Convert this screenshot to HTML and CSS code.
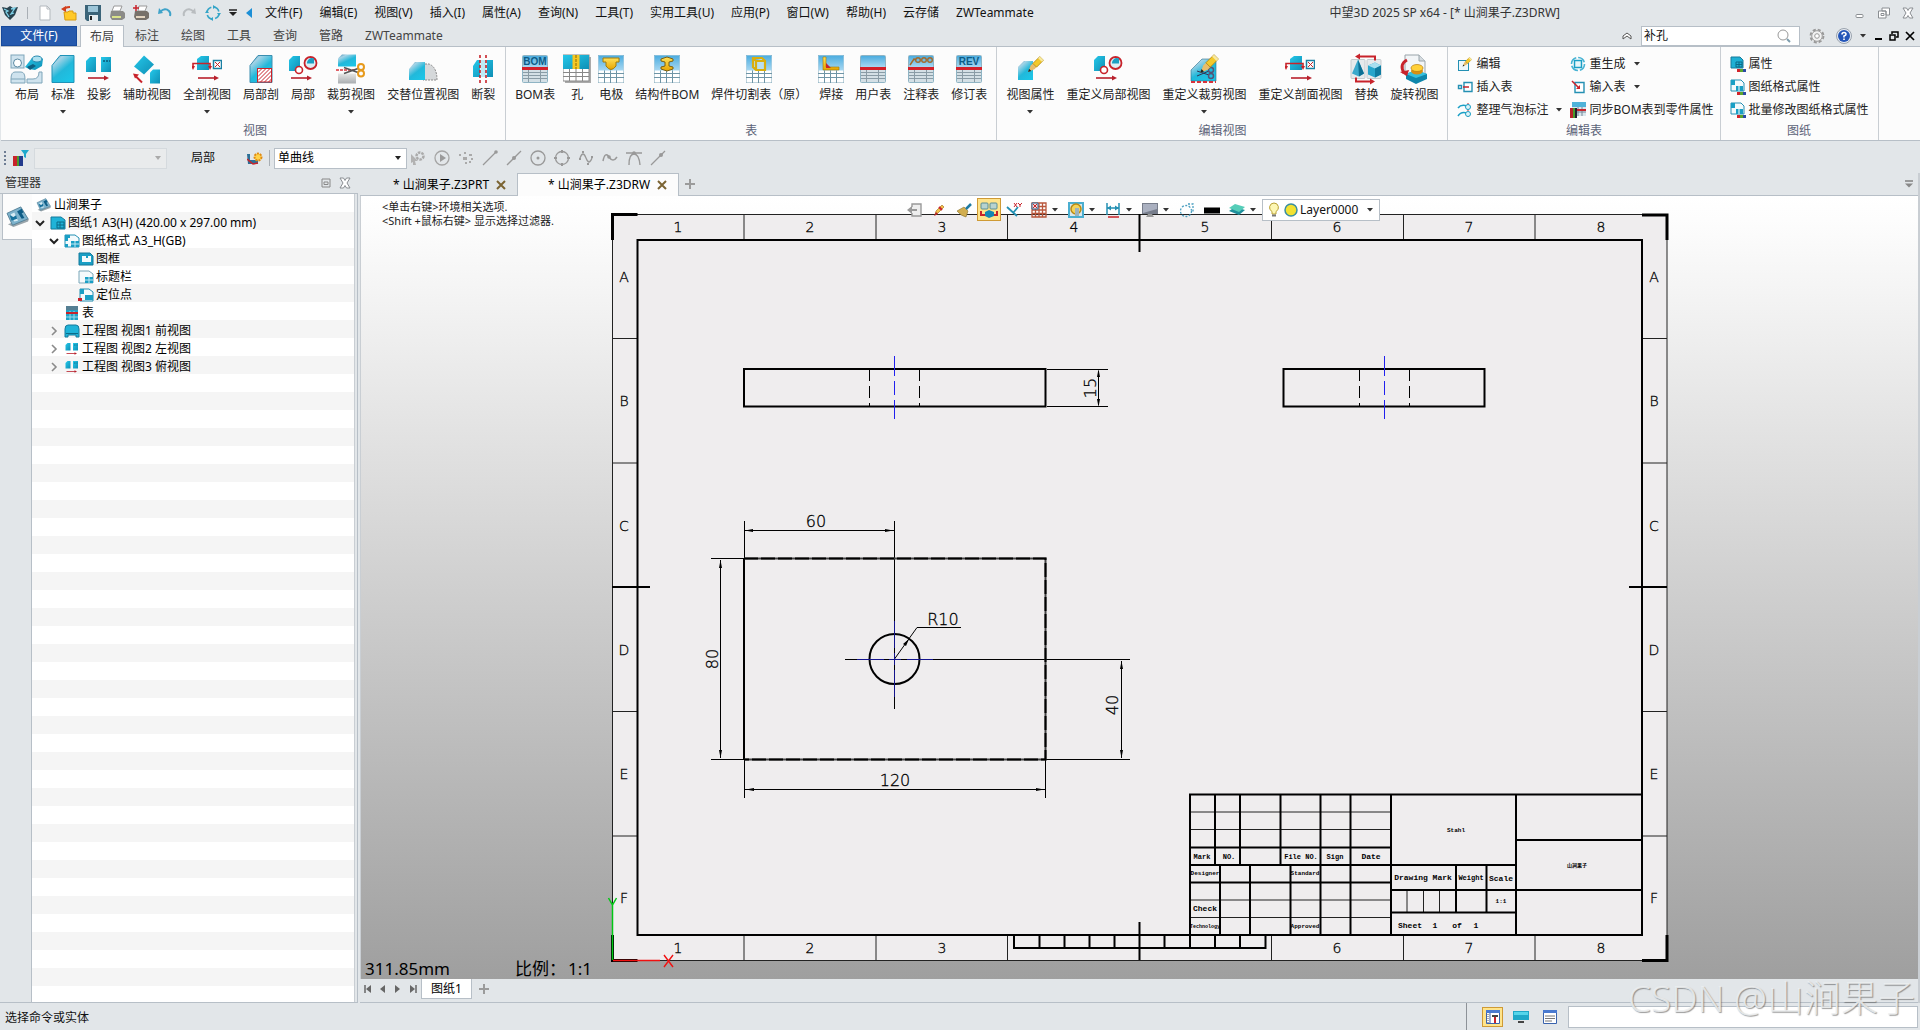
FILE: index.html
```html
<!DOCTYPE html>
<html lang="zh-CN">
<head>
<meta charset="utf-8">
<title>中望3D 2025 SP x64 - [* 山涧果子.Z3DRW]</title>
<link rel="stylesheet" href="styles.css">
</head>
<body>
<svg class="sprite" aria-hidden="true">
  <defs>
    <linearGradient id="cy" x1="0" y1="0" x2=".7" y2="1"><stop offset="0" stop-color="#3a86ad"/><stop offset=".25" stop-color="#a5d3e6"/><stop offset=".6" stop-color="#22b8da"/><stop offset="1" stop-color="#1cc4e6"/></linearGradient>
    <linearGradient id="cb" x1="0" y1="0" x2="1" y2="1"><stop offset="0" stop-color="#25c8ea"/><stop offset="1" stop-color="#0f8fb5"/></linearGradient>
    <linearGradient id="sky" x1="0" y1="0" x2="0" y2="1"><stop offset="0" stop-color="#4bacdf"/><stop offset="1" stop-color="#a8d8f2"/></linearGradient>
    <linearGradient id="gr" x1="0" y1="0" x2="0" y2="1"><stop offset="0" stop-color="#e6e6e6"/><stop offset="1" stop-color="#a9adb0"/></linearGradient>
    <linearGradient id="au" x1="0" y1="0" x2="0" y2="1"><stop offset="0" stop-color="#ffe25a"/><stop offset="1" stop-color="#e6a400"/></linearGradient>
  </defs>
  <symbol id="pencil" viewBox="0 0 16 16"><path d="M1 15l2.500-6L10 2.500 13.500 6 7 12.500z" fill="#e8bd6a"/><path d="M5.500 7L12 .5 15.500 4 9 10.500z" fill="#f3c92b" stroke="#a67c10" stroke-width=".6"/><path d="M12 .5L15.500 4 14 5.500 10.500 2z" fill="#f7e9a0"/><path d="M1 15l1-3 2 2z" fill="#222"/></symbol>
  <symbol id="tbl" viewBox="0 0 26 28"><rect width="26" height="28" rx="1" fill="#fff" stroke="#7fa6b8"/><path d="M0 18.500h26M0 22.500h26M6.500 15v13M12.500 15v13M18.500 15v13" stroke="#6f95a6" fill="none"/><rect x=".5" y=".5" width="25" height="15" fill="url(#sky)"/></symbol>
  <symbol id="bomt" viewBox="0 0 26 28"><rect x=".5" y=".5" width="25" height="27" rx="1" fill="#d4e0e6" stroke="#8fb4c4"/><rect x="1" y="1" width="24" height="11" fill="url(#sky)"/><path d="M1 17.500h24M1 20.500h24M1 23.500h24M6.500 15v12M18.500 15v12" stroke="#8a9ca6" fill="none"/><path d="M0 12h26v3H0z" fill="#d3202a"/></symbol>
  <symbol id="sect" viewBox="0 0 30 28"><path d="M5 4l4-3h8v14H5z" fill="url(#cb)"/><path d="M1 12V8.500h17V12" fill="none" stroke="#c8232b" stroke-width="1.600"/><path d="M-1 11h4l-2 4zM16 11h4l-2 4z" fill="#c8232b"/><rect x="21.500" y="5.500" width="8" height="8" fill="#fff" stroke="#1b7fa3" stroke-width="1.500"/><path d="M23 12l5-5M23 7l5 5" stroke="#c8232b"/><path d="M6 23h17" stroke="#b8202c" stroke-width="1.600"/><path d="M22 20.500l5 2.500-5 2.500z" fill="#b8202c"/></symbol>
  <symbol id="detail" viewBox="0 0 30 28"><path d="M1 5l4-4h7v15H1z" fill="url(#cb)"/><circle cx="11" cy="15" r="3.500" fill="#fff" stroke="#c8232b" stroke-width="1.600"/><circle cx="22.500" cy="8" r="6" fill="#dceff5" stroke="#c8232b" stroke-width="1.800"/><path d="M19 8.500h7v-5a5 5 0 0 0-7 5z" fill="#1b9fc3"/><path d="M3 23h17" stroke="#b8202c" stroke-width="1.600"/><path d="M19 20.500l5 2.500-5 2.500z" fill="#b8202c"/></symbol>
  <symbol id="proj" viewBox="0 0 28 28"><path d="M1 6l4-4h6v15H1z" fill="url(#cb)"/><path d="M16 2h10v15H16z" fill="url(#cb)"/><path d="M18 6h7" stroke="#075b7a" stroke-width="1.500" stroke-dasharray="2 1"/><path d="M3 23h17" stroke="#b8202c" stroke-width="1.600"/><path d="M19 20.500l5 2.500-5 2.500z" fill="#b8202c"/></symbol>
  <symbol id="std" viewBox="0 0 24 29"><path d="M1 11L9 1h14v27H1z" fill="url(#cy)" stroke="#1f93b8"/></symbol>
  <symbol id="lay" viewBox="0 0 34 30"><rect x="1" y="1" width="13" height="13" fill="#cfe3ee" stroke="#7fa5b9"/><circle cx="7.500" cy="9" r="4" fill="#fff" stroke="#5b8aa3"/><path d="M15 13l7-9 7-2 4 3-1 7-7 4-6-1z" fill="url(#cb)"/><ellipse cx="27" cy="5" rx="5" ry="3" fill="#aee1f0" stroke="#2b8bb0"/><path d="M17 13l6-3 3 2-6 4z" fill="#0f5f80"/><path d="M1 25q0-7 4-7h6q4 0 4 7v4H1z" fill="#cfe3ee" stroke="#7fa5b9"/><path d="M1 25h14" stroke="#7fa5b9"/><path d="M29 18h3v11H17v-4h6q6 0 6-7z" fill="#cfe3ee" stroke="#7fa5b9"/></symbol>
  <symbol id="aux" viewBox="0 0 28 29"><path d="M11 1l10 9-10 10L1 12z" fill="url(#cb)"/><path d="M17 29V18l3-3h7v14z" fill="url(#cb)"/><path d="M9 28l-6-6" stroke="#c8232b" stroke-width="2"/><path d="M0 19l6 1-4 4z" fill="#c8232b"/></symbol>
  <symbol id="broken" viewBox="0 0 24 29"><path d="M1 11L9 1h14v27H1z" fill="url(#cy)" stroke="#3a8eb0"/><rect x="8.500" y="14" width="14" height="13.500" fill="#fff" stroke="#c8232b"/><path d="M9 18l3.500-3.500M9 22l7.500-7.500M9 26l11.500-11.500M11.500 27.500l11-11M15.500 27.500l7-7M19.500 27.500l3-3" stroke="#c8232b"/></symbol>
  <symbol id="cut" viewBox="0 0 30 31"><path d="M2 5l4-4h14v12H2z" fill="url(#cy)"/><path d="M2 20h18v10H2z" fill="url(#gr)"/><path d="M0 16.500h20" stroke="#d8323a" stroke-width="1.500" stroke-dasharray="3 1"/><path d="M8 14l14 5M8 20l14-5" stroke="#555" stroke-width="1.600"/><circle cx="25" cy="13.500" r="3" fill="none" stroke="#e79a1c" stroke-width="2"/><circle cx="25" cy="20" r="3" fill="none" stroke="#e79a1c" stroke-width="2"/></symbol>
  <symbol id="alt" viewBox="0 0 30 28"><path d="M15 25V9h6q8 3 8 16z" fill="#d5d8da" stroke="#888" stroke-dasharray="2 1"/><path d="M1 14l6-7h10v18H1z" fill="url(#cy)"/></symbol>
  <symbol id="brk" viewBox="0 0 22 28"><path d="M1 11l4-6h3v17H1zM15 5h6v17h-6z" fill="url(#cb)"/><path d="M8.500 5h6v17h-6z" fill="#bfeaf5"/><path d="M8 0v28M14 0v28" stroke="#c8232b" stroke-width="1.600" stroke-dasharray="3 2"/></symbol>
  <symbol id="swap" viewBox="0 0 32 31"><rect x="1" y="6" width="14" height="19" rx="1" fill="#e6eaec" stroke="#c5cbce"/><rect x="17" y="6" width="14" height="19" rx="1" fill="#e6eaec" stroke="#c5cbce"/><path d="M8 6l6 14-5 3-7-3z" fill="#3ba9cc"/><path d="M8 6l6 14-5 3z" fill="#0d6f93"/><path d="M18 12l7-3 6 3v9l-6 3-7-3z" fill="#27a5cb"/><path d="M18 12l7-3 6 3-6 3z" fill="#a8dff0"/><path d="M25 15l6-3v9l-6 3z" fill="#0f7ba0"/><path d="M25 7V3H9M6 24v4h15" fill="none" stroke="#c8232b" stroke-width="2"/><path d="M10 0v6L5 3zM20 25v6l5-3z" fill="#c8232b"/></symbol>
  <symbol id="rot" viewBox="0 0 30 30"><path d="M6 1h14l6 6v14H6z" fill="#f2f5f7" stroke="#99a4aa"/><path d="M20 1v6h6" fill="#d5dbdf" stroke="#99a4aa"/><path d="M7 20l10-4 11 4v5l-11 5-10-5z" fill="#0f86ab"/><path d="M7 20l10-4 11 4-11 4z" fill="#35c0df"/><ellipse cx="18" cy="17" rx="6" ry="3.500" fill="#d98f12"/><ellipse cx="18" cy="14" rx="6" ry="3.500" fill="#ffd038" stroke="#b97b0a" stroke-width=".7"/><path d="M8 6q-8 4-3 13" fill="none" stroke="#c8232b" stroke-width="3"/><path d="M1 18l9-2-2 6z" fill="#c8232b"/></symbol>
  <symbol id="prop" viewBox="0 0 16 16"><path d="M1 1h9l3 3v8H1z" fill="#1fb0d4" stroke="#167b9b"/><path d="M6 6h6v5H6zM9 6v5M6 8.500h6" fill="none" stroke="#0b6b88"/><path d="M7 13h3v3H7z" fill="#d2232a"/><path d="M10 13h3v3h-3z" fill="#5da52c"/><path d="M13 13h3v3h-3z" fill="#2b49a5"/></symbol>
  <symbol id="fmt" viewBox="0 0 16 16"><path d="M1 1h10l3 3v8H1z" fill="#f4fafc" stroke="#2490b3"/><path d="M1 1h4v5H1zM6 7h7v5H6z" fill="#1a9fc5"/><path d="M9 7v5" stroke="#fff"/><path d="M7 13h3v3H7z" fill="#d2232a"/><path d="M10 13h3v3h-3z" fill="#5da52c"/><path d="M13 13h3v3h-3z" fill="#2b49a5"/></symbol>
  <symbol id="sheet" viewBox="0 0 16 14"><path d="M1 1h10l4 3v9H1z" fill="#1fb3d8" stroke="#157b9c"/><path d="M7 6h7v6H7zM10 6v6M7 9h7" fill="none" stroke="#0b6b88"/></symbol>
  <symbol id="sheetf" viewBox="0 0 16 14"><path d="M1 1h10l4 3v9H1z" fill="#f4fafc" stroke="#2490b3"/><path d="M1 1h5v3H4v3H1zM1 10h3v3H1zM7 7h8v6H7z" fill="#1a9fc5"/><path d="M11 7v6M7 10h8" stroke="#bfe8f3"/></symbol>
  <symbol id="frame" viewBox="0 0 16 14"><path d="M1 1h11l3 3v9H1z" fill="#1a9fc5" stroke="#157b9c"/><path d="M4 4h4v2h2V4h3v6H4z" fill="#f4fafc"/></symbol>
  <symbol id="title" viewBox="0 0 16 14"><path d="M1 1h10l4 3v9H1z" fill="#f4fafc" stroke="#7ba6b8"/><path d="M7 7h8v6H7z" fill="#1a9fc5"/><path d="M11 7v6M7 10h8" stroke="#bfe8f3"/></symbol>
  <symbol id="anchor" viewBox="0 0 16 14"><path d="M2 1h9l4 3v9H2z" fill="#f4fafc" stroke="#2490b3"/><path d="M2 1h4v5H2zM7 7h8v5H7z" fill="#1a9fc5"/><path d="M0 10h4v3H0z" fill="#c8232b"/></symbol>
  <symbol id="car" viewBox="0 0 16 14"><path d="M1 5q0-4 3-4h8q3 0 3 4v8h-3v-2H4v2H1z" fill="#1fb3d8" stroke="#157b9c"/><path d="M2 9.500h12" stroke="#0b6b88"/></symbol>
  <symbol id="root" viewBox="0 0 26 24"><path d="M2 20l6 3 16-6 1-3-18 4z" fill="#9aa5ab"/><path d="M1 8L16 1l8 13-17 7z" fill="#7db2cc" stroke="#537f96"/><path d="M5 9l4-2 4 9-4 1z" fill="#d7ebf4"/><path d="M12 6l5-3 2 4-2 1 3 5-3 1z" fill="#0d5c86"/><path d="M4 10l2 6 6-2-1-4-3 2z" fill="#17719c"/></symbol>
  <symbol id="chev-d" viewBox="0 0 10 8"><path d="M1 2l4 4 4-4" fill="none" stroke="#222" stroke-width="2"/></symbol>
  <symbol id="chev-r" viewBox="0 0 8 10"><path d="M2 1l4 4-4 4" fill="none" stroke="#8b8b8b" stroke-width="1.600"/></symbol>
  <symbol id="dn" viewBox="0 0 6 4"><path d="M0 0h6L3 3.500z" fill="#333"/></symbol>
  <symbol id="x" viewBox="0 0 12 12"><path d="M2 2l8 8M10 2l-8 8" stroke="#7b6433" stroke-width="2"/></symbol>
  <symbol id="xo" viewBox="0 0 12 12"><path d="M1 1h3.500L6 3.500 7.500 1H11L8 6l3 5H7.500L6 8.500 4.500 11H1l3-5z" fill="#fff" stroke="#8a8e92"/></symbol>
  <symbol id="plus" viewBox="0 0 12 12"><path d="M6 1v10M1 6h10" stroke="#9b9b9b" stroke-width="2"/></symbol>
</svg>

<header class="titlebar">
  <nav class="quick" aria-label="快速访问">
    <button aria-label="中望3D"><svg width="16" height="16" viewBox="0 0 16 16"><path d="M0 2l5 1 3-2 3 2 5-1-3 8-5 5-5-5z" fill="#28434f"/><path d="M2 4l4 2-2 1 3 5M9 4l4-1-4 6 3-1" fill="none" stroke="#7fd3ea" stroke-width="1.300"/></svg></button>
    <i class="rule"></i>
    <button aria-label="新建"><svg width="16" height="16" viewBox="0 0 16 16"><path d="M3 1h7l3 3v11H3z" fill="#fff" stroke="#b3b9be"/><path d="M10 1v3h3" fill="none" stroke="#b3b9be"/></svg></button>
    <button aria-label="打开"><svg width="16" height="16" viewBox="0 0 16 16"><path d="M3 7h4l1-1h4v2h3v7H4z" fill="#ffc928" stroke="#d89a10"/><path d="M2 5q2-3 7-3" fill="none" stroke="#d2401e" stroke-width="2"/><path d="M0 4l5-3v6z" fill="#d2401e"/></svg></button>
    <button aria-label="保存"><svg width="16" height="16" viewBox="0 0 16 16"><path d="M0 0h16v16H2l-2-2z" fill="#3b6479"/><path d="M3 1h10v6H3z" fill="#9cc5d8"/><path d="M4 10h9v6H4z" fill="#e6edf0"/><path d="M5 11h2v4H5z" fill="#222"/></svg></button>
    <button aria-label="打印"><svg width="16" height="16" viewBox="0 0 16 16"><path d="M5 1h8l-2 5H3z" fill="#fff" stroke="#999"/><path d="M2 6h12l2 2v5l-3 2H3l-2-3z" fill="#8b8b88"/><path d="M3 11h9v2H3z" fill="#d9e28a"/></svg></button>
    <button aria-label="批量打印"><svg width="16" height="16" viewBox="0 0 16 16"><path d="M6 1h8l-2 5H5z" fill="#fff" stroke="#999"/><path d="M2 6h12l2 2v5l-3 2H3l-2-3z" fill="#77716a"/><path d="M3 11h9v2H3z" fill="#e3d5c0"/><path d="M3 0v6M0 3h6" stroke="#c8232b" stroke-width="1.500"/></svg></button>
    <button aria-label="撤销"><svg width="16" height="16" viewBox="0 0 16 16"><path d="M3 7q5-5 9-1 2 2 1 5" fill="none" stroke="#3fa3c9" stroke-width="2"/><path d="M1 9l1-6 4 5z" fill="#3fa3c9"/></svg></button>
    <button aria-label="重做"><svg width="16" height="16" viewBox="0 0 16 16"><path d="M13 7Q8 2 4 6q-2 2-1 5" fill="none" stroke="#b9bdc0" stroke-width="2"/><path d="M15 9l-1-6-4 5z" fill="#b9bdc0"/></svg></button>
    <button aria-label="刷新"><svg width="16" height="16" viewBox="0 0 16 16"><circle cx="8" cy="8" r="6" fill="none" stroke="#35a5c8" stroke-width="1.600" stroke-dasharray="7 2.400"/><path d="M8 0l3 2-3 2zM16 8l-2 3-2-3zM8 16l-3-2 3-2zM0 8l2-3 2 3z" fill="#35a5c8"/></svg></button>
    <button class="narrow" aria-label="自定义"><svg width="8" height="8" viewBox="0 0 8 8"><path d="M0 1h8" stroke="#222" stroke-width="1.500"/><path d="M0 3h8L4 7z" fill="#222"/></svg></button>
    <button class="narrow" aria-label="收起"><svg width="6" height="10" viewBox="0 0 6 10"><path d="M6 0v10L0 5z" fill="#1c8fd6"/></svg></button>
  </nav>
  <nav class="menu" aria-label="菜单">
    <button>文件(F)</button><button>编辑(E)</button><button>视图(V)</button><button>插入(I)</button><button>属性(A)</button><button>查询(N)</button><button>工具(T)</button><button>实用工具(U)</button><button>应用(P)</button><button>窗口(W)</button><button>帮助(H)</button><button>云存储</button><button>ZWTeammate</button>
  </nav>
  <h1 class="apptitle">中望3D 2025 SP x64 - [* 山涧果子.Z3DRW]</h1>
  <div class="winctl">
    <button aria-label="最小化"><svg width="12" height="12" viewBox="0 0 12 12"><rect x="2" y="7.500" width="7" height="3" rx="1" fill="#fff" stroke="#8a8e92"/></svg></button>
    <button aria-label="还原"><svg width="12" height="12" viewBox="0 0 12 12"><path d="M4 1h7.500v7H8V4H4zM.5 4H8v7H.5z" fill="#fff" stroke="#8a8e92"/><path d="M3 6.500h3v2H3z" fill="none" stroke="#8a8e92"/></svg></button>
    <button aria-label="关闭"><svg width="12" height="12"><use href="#xo"/></svg></button>
  </div>
</header>

<div class="tabrow">
  <button class="filetab">文件(F)</button>
  <nav class="tabs" aria-label="功能区">
    <button class="on">布局</button><button>标注</button><button>绘图</button><button>工具</button><button>查询</button><button>管路</button><button>ZWTeammate</button>
  </nav>
  <div class="tabright">
    <button aria-label="折叠功能区"><svg width="10" height="8" viewBox="0 0 10 8"><path d="M1 4l4-3 4 3v3L5 4 1 7z" fill="#fff" stroke="#555"/></svg></button>
    <label class="search"><input type="text" value="补孔" aria-label="搜索"><svg width="14" height="14" viewBox="0 0 14 14"><circle cx="6" cy="6" r="5" fill="none" stroke="#999"/><path d="M10 10l3 3" stroke="#7d9cad" stroke-width="2"/></svg></label>
    <button aria-label="设置"><svg width="16" height="16" viewBox="0 0 16 16"><circle cx="8" cy="8" r="6.500" fill="#eee" stroke="#999" stroke-width="1.800" stroke-dasharray="3.100 2"/><circle cx="8" cy="8" r="5.300" fill="#f2f2f2" stroke="#999"/><circle cx="8" cy="8" r="2.300" fill="#fff" stroke="#999"/></svg></button>
    <button class="help" aria-label="帮助"><svg width="16" height="16" viewBox="0 0 16 16"><circle cx="8" cy="8" r="7.500" fill="#e6ebf2" stroke="#9aa3ad"/><circle cx="8" cy="8" r="6" fill="#2456b8"/><path d="M6 6.500q0-2 2-2t2 1.700Q10 7.500 8 8v1.500M8 10.500V12" fill="none" stroke="#fff" stroke-width="1.600"/></svg><svg width="6" height="4"><use href="#dn"/></svg></button>
    <div class="mdi">
      <button aria-label="最小化文档"><svg width="8" height="10" viewBox="0 0 8 10"><path d="M0 8h7" stroke="#000" stroke-width="2"/></svg></button>
      <button aria-label="还原文档"><svg width="10" height="10" viewBox="0 0 10 10"><path d="M3 3V1h6v5H7M1 4h5v5H1z" fill="none" stroke="#000" stroke-width="1.500"/></svg></button>
      <button aria-label="关闭文档"><svg width="10" height="10" viewBox="0 0 10 10"><path d="M1 1l8 8M9 1L1 9" stroke="#000" stroke-width="1.700"/></svg></button>
    </div>
  </div>
</div>

<div class="ribbon">
  <section class="group first">
    <div class="items">
      <button><svg width="34" height="30"><use href="#lay"/></svg>布局</button>
      <button><svg width="24" height="30"><use href="#std"/></svg>标准<svg class="dd" width="6" height="4"><use href="#dn"/></svg></button>
      <button><svg width="28" height="28"><use href="#proj"/></svg>投影</button>
      <button><svg width="28" height="30"><use href="#aux"/></svg>辅助视图</button>
      <button><svg width="30" height="28"><use href="#sect"/></svg>全剖视图<svg class="dd" width="6" height="4"><use href="#dn"/></svg></button>
      <button><svg width="24" height="30"><use href="#broken"/></svg>局部剖</button>
      <button><svg width="30" height="28"><use href="#detail"/></svg>局部</button>
      <button><svg width="30" height="30"><use href="#cut"/></svg>裁剪视图<svg class="dd" width="6" height="4"><use href="#dn"/></svg></button>
      <button><svg width="30" height="28"><use href="#alt"/></svg>交替位置视图</button>
      <button><svg width="22" height="28"><use href="#brk"/></svg>断裂</button>
    </div>
    <h2>视图</h2>
  </section>
  <section class="group">
    <div class="items">
      <button><svg width="26" height="28" viewBox="0 0 26 28"><use href="#bomt" width="26" height="28"/><text class="ictext" x="13" y="10">BOM</text></svg>BOM表</button>
      <button><svg width="28" height="28" viewBox="0 0 28 28"><rect x="2" y="2" width="26" height="26" fill="#aaa"/><rect width="26" height="26" fill="#fff" stroke="#888"/><path d="M0 17.500h26M0 21.500h26M6.500 14v12M13 14v12M19.500 14v12" stroke="#888"/><rect width="26" height="14" fill="url(#cb)"/><rect x="9.500" width="7" height="14" fill="#f5c823"/><path d="M13 0v14" stroke="#8a6a00" stroke-dasharray="3 1"/></svg>孔</button>
      <button><svg width="26" height="28" viewBox="0 0 26 28"><use href="#tbl" width="26" height="28"/><path d="M5 3h16v4h-3v4q-5 7-10 0V7H5z" fill="url(#au)" stroke="#a27a08"/></svg>电极</button>
      <button><svg width="26" height="28" viewBox="0 0 26 28"><use href="#tbl" width="26" height="28"/><path d="M7 4l6-2 6 2v2l-4 1v4l4 1v2l-6 2-6-2v-2l4-1V7L7 6z" fill="url(#au)" stroke="#7d6010"/></svg>结构件BOM</button>
      <button><svg width="26" height="28" viewBox="0 0 26 28"><use href="#tbl" width="26" height="28"/><path d="M7 3h9l3 3v9h-9l-3-3zM7 3l3 3h9M10 6v9" fill="#b9dff0" stroke="#d9ae0d" stroke-width="2.200"/></svg>焊件切割表（原）</button>
      <button><svg width="26" height="28" viewBox="0 0 26 28"><use href="#tbl" width="26" height="28"/><path d="M5 2h3v10h13v3H5z" fill="url(#au)" stroke="#a27a08" stroke-width=".6"/><path d="M8 8v5h5z" fill="#c8232b"/></svg>焊接</button>
      <button><svg width="26" height="28"><use href="#bomt"/></svg>用户表</button>
      <button><svg width="26" height="28" viewBox="0 0 26 28"><use href="#bomt" width="26" height="28"/><path d="M2 10l4-6 2 1" fill="none" stroke="#a36a2c" stroke-width="1.500"/><circle cx="10" cy="5" r="2.300" fill="none" stroke="#a36a2c" stroke-width="1.400"/><circle cx="16" cy="5" r="2.300" fill="none" stroke="#a36a2c" stroke-width="1.400"/><circle cx="22" cy="5" r="2.300" fill="none" stroke="#a36a2c" stroke-width="1.400"/></svg>注释表</button>
      <button><svg width="26" height="28" viewBox="0 0 26 28"><use href="#bomt" width="26" height="28"/><text class="ictext" x="13" y="10">REV</text></svg>修订表</button>
    </div>
    <h2>表</h2>
  </section>
  <section class="group">
    <div class="items">
      <button><svg width="28" height="28" viewBox="0 0 28 28"><path d="M2 12l6-6h9v19H2z" fill="url(#cy)"/><use href="#pencil" x="11" y="1" width="17" height="17"/></svg>视图属性<svg class="dd" width="6" height="4"><use href="#dn"/></svg></button>
      <button><svg width="30" height="28"><use href="#detail"/></svg>重定义局部视图</button>
      <button><svg width="30" height="30" viewBox="0 0 30 30"><path d="M2 16l11-11h14v22H2z" fill="url(#cy)" stroke="#2e6f8a" stroke-width=".6"/><path d="M2 28h25" stroke="#d8323a" stroke-width="2" stroke-dasharray="4 2"/><path d="M8 17l12 4M8 22l12-5" stroke="#335"/><circle cx="22" cy="16" r="2.500" fill="none" stroke="#557" stroke-width="1.500"/><circle cx="22" cy="22" r="2.500" fill="none" stroke="#557" stroke-width="1.500"/><use href="#pencil" x="10" y="0" width="20" height="20"/></svg>重定义裁剪视图<svg class="dd" width="6" height="4"><use href="#dn"/></svg></button>
      <button><svg width="30" height="28"><use href="#sect"/></svg>重定义剖面视图</button>
      <button><svg width="32" height="31"><use href="#swap"/></svg>替换</button>
      <button><svg width="30" height="30"><use href="#rot"/></svg>旋转视图</button>
    </div>
    <h2>编辑视图</h2>
  </section>
  <section class="group">
    <div class="cols edit">
      <div class="col">
        <button><svg width="16" height="16" viewBox="0 0 16 16"><rect x="1.500" y="4.500" width="10" height="10" fill="#eef8fb" stroke="#2490b3"/><use href="#pencil" x="5" y="1" width="10" height="10"/></svg>编辑</button>
        <button><svg width="16" height="16" viewBox="0 0 16 16"><path d="M1.500 6.500h3v3h-3zM7 3.500h8v9H7z" fill="#fff" stroke="#2490b3" stroke-width="1.400"/><path d="M6 8h6" stroke="#c8232b" stroke-width="1.500"/></svg>插入表</button>
        <button><svg width="16" height="16" viewBox="0 0 16 16"><path d="M1 6q3-4 9-2M1 14q3-5 9-3" fill="none" stroke="#1a9fc5" stroke-width="1.500"/><path d="M11 1v14" stroke="#c8232b" stroke-dasharray="2 1"/><circle cx="11" cy="5" r="2.500" fill="#dff3f8" stroke="#1a9fc5"/><circle cx="11" cy="12" r="2.500" fill="#dff3f8" stroke="#1a9fc5"/></svg>整理气泡标注<svg class="side" width="6" height="4"><use href="#dn"/></svg></button>
      </div>
      <div class="col">
        <button><svg width="16" height="16" viewBox="0 0 16 16"><circle cx="8" cy="8" r="6.500" fill="none" stroke="#48b3d3" stroke-width="1.600" stroke-dasharray="8 2"/><rect x="4.500" y="4.500" width="7" height="7" fill="#e7f6fa" stroke="#1a9fc5" stroke-width="1.500"/></svg>重生成<svg class="side" width="6" height="4"><use href="#dn"/></svg></button>
        <button><svg width="16" height="16" viewBox="0 0 16 16"><path d="M5 3.500h9v10H5z" fill="#fff" stroke="#2490b3" stroke-width="1.400"/><path d="M2 2l7 7" stroke="#c8232b" stroke-width="1.500"/><path d="M10 6v4H6z" fill="#c8232b"/></svg>输入表<svg class="side" width="6" height="4"><use href="#dn"/></svg></button>
        <button><svg width="16" height="16" viewBox="0 0 16 16"><rect x="2" width="14" height="14" fill="#d9e6ec"/><rect x="2" width="14" height="5" fill="#4fb2d8"/><path d="M8 5v9M12 5v9M2 10h14" stroke="#789"/><path d="M6 8h10" stroke="#c8232b" stroke-width="2"/><path d="M0 6h3v10H0z" fill="#b5222a"/><path d="M3 6h2v10H3z" fill="#4a9a2c"/><path d="M5 6h2v10H5z" fill="#223"/></svg>同步BOM表到零件属性</button>
      </div>
    </div>
    <h2>编辑表</h2>
  </section>
  <section class="group">
    <div class="cols">
      <div class="col">
        <button><svg width="16" height="16"><use href="#prop"/></svg>属性</button>
        <button><svg width="16" height="16"><use href="#fmt"/></svg>图纸格式属性</button>
        <button><svg width="16" height="16"><use href="#fmt"/></svg>批量修改图纸格式属性</button>
      </div>
    </div>
    <h2>图纸</h2>
  </section>
</div>

<div class="optbar">
  <i class="grip"></i>
  <button aria-label="过滤颜色"><svg width="16" height="16" viewBox="0 0 16 16"><path d="M0 6h4v10H0z" fill="#c8232b"/><path d="M4 6h2v10H4z" fill="#4a9a2c"/><path d="M6 6h4v10H6z" fill="#223a8c"/><path d="M8 0h8l-3 4v4l-2-1V4z" fill="#1fa8cc"/></svg></button>
  <span class="combo dis"><select disabled aria-label="过滤器"><option></option></select></span>
  <button class="scope">局部</button>
  <button aria-label="捕捉设置"><svg width="16" height="14" viewBox="0 0 16 14"><path d="M0 3h3v6h8v4H1z" fill="#2d6f96"/><path d="M0 8l6 5 5-1" stroke="#c8232b" stroke-width="1.500" fill="none"/><circle cx="11" cy="6" r="3.500" fill="#ffd24a" stroke="#e08a12" stroke-width="2" stroke-dasharray="2 1"/></svg></button>
  <i class="rule"></i>
  <span class="combo"><select aria-label="曲线类型"><option>单曲线</option></select></span>
  <div class="picks">
    <button disabled aria-label="拾取设置"><svg viewBox="0 0 16 16"><path d="M1 4l7 7H5l1 4H3v-3l-2 1z" fill="#b2b2b2"/><circle cx="10" cy="6" r="3.500" fill="none" stroke="#aaa" stroke-width="2.500" stroke-dasharray="2.500 1"/></svg></button>
    <button disabled aria-label="播放"><svg viewBox="0 0 16 16"><circle cx="8" cy="8" r="7" fill="none" stroke="#a5a5a5" stroke-width="1.300"/><path d="M6 4l6 4-6 4z" fill="#9b9b9b"/></svg></button>
    <button disabled aria-label="点"><svg viewBox="0 0 16 16"><path d="M1 4h2v2H1zM6 2h2v2H6zM5 7h4v3H5zM11 4h3v2h-3zM13 8h2v2h-2zM7 12h2v2H7zM11 11h2v2h-2z" fill="#aaa"/></svg></button>
    <button disabled aria-label="端点"><svg viewBox="0 0 16 16"><path d="M1 15L14 2" stroke="#999" stroke-width="1.300"/><circle cx="14" cy="2" r="1.800" fill="#999"/></svg></button>
    <button disabled aria-label="中点"><svg viewBox="0 0 16 16"><path d="M1 15L15 1" stroke="#999" stroke-width="1.300"/><circle cx="8" cy="8" r="2" fill="#999"/></svg></button>
    <button disabled aria-label="圆心"><svg viewBox="0 0 16 16"><circle cx="8" cy="8" r="7" fill="none" stroke="#999" stroke-width="1.300"/><circle cx="8" cy="8" r="1.500" fill="#999"/></svg></button>
    <button disabled aria-label="象限点"><svg viewBox="0 0 16 16"><circle cx="8" cy="8" r="6.500" fill="none" stroke="#999" stroke-width="1.300"/><path d="M7 0h2v3H7zM7 13h2v3H7zM0 7h3v2H0zM13 7h3v2h-3z" fill="#999"/></svg></button>
    <button disabled aria-label="曲线点"><svg viewBox="0 0 16 16"><path d="M2 8Q5 0 8 8t6 0" fill="none" stroke="#999" stroke-width="1.300"/><path d="M1 8h2v2H1zM4 1h2v2H4zM9 13h2v2H9zM13 6h2v2h-2z" fill="#999"/></svg></button>
    <button disabled aria-label="拐点"><svg viewBox="0 0 16 16"><path d="M1 11Q3 1 7 7t8 0" fill="none" stroke="#999" stroke-width="1.500"/><circle cx="7" cy="7" r="1.800" fill="#999"/></svg></button>
    <button disabled aria-label="切点"><svg viewBox="0 0 16 16"><path d="M0 3h16M3 15Q3 4 8 4t6 11" fill="none" stroke="#999" stroke-width="1.400"/><circle cx="8" cy="3" r="1.800" fill="#999"/></svg></button>
    <button disabled aria-label="最近点"><svg viewBox="0 0 16 16"><path d="M1 15L15 1" stroke="#999" stroke-width="1.300"/><circle cx="11" cy="5" r="2" fill="#999"/></svg></button>
  </div>
</div>

<main class="work">
  <aside class="manager">
    <div class="mhead"><h2>管理器</h2>
      <button aria-label="浮动"><svg width="10" height="10" viewBox="0 0 10 10"><path d="M1 1h8v8H1zM3 4h4v2.500H3z" fill="none" stroke="#888"/></svg></button>
      <button aria-label="关闭"><svg width="12" height="12"><use href="#xo"/></svg></button>
    </div>
    <div class="mbody">
      <div class="strip"><button aria-label="历史管理"><svg width="24" height="22"><use href="#root"/></svg></button></div>
      <ul class="tree">
        <li class="l0"><svg class="ic" width="16" height="14"><use href="#root"/></svg>山涧果子</li>
        <li class="l1"><svg class="ch" width="10" height="8"><use href="#chev-d"/></svg><svg class="ic" width="16" height="14"><use href="#sheet"/></svg>图纸1 A3(H) (420.00 x 297.00 mm)</li>
        <li class="l2"><svg class="ch" width="10" height="8"><use href="#chev-d"/></svg><svg class="ic" width="16" height="14"><use href="#sheetf"/></svg>图纸格式 A3_H(GB)</li>
        <li class="l3"><svg class="ic" width="16" height="14"><use href="#frame"/></svg>图框</li>
        <li class="l3"><svg class="ic" width="16" height="14"><use href="#title"/></svg>标题栏</li>
        <li class="l3"><svg class="ic" width="16" height="14"><use href="#anchor"/></svg>定位点</li>
        <li class="l2"><i class="ch"></i><svg class="ic" width="16" height="14" viewBox="0 0 16 14"><path d="M2 0h12v14H2z" fill="#1fa3c8"/><path d="M2 0h12v4H2z" fill="#557f93"/><path d="M2 11h12M6 5v9M10 5v9" stroke="#9cdcee"/><path d="M2 7h12" stroke="#c8232b" stroke-width="2"/></svg>表</li>
        <li class="l2"><svg class="ch" width="8" height="10"><use href="#chev-r"/></svg><svg class="ic" width="16" height="14"><use href="#car"/></svg>工程图 视图1 前视图</li>
        <li class="l2"><svg class="ch" width="8" height="10"><use href="#chev-r"/></svg><svg class="ic" width="16" height="14"><use href="#proj"/></svg>工程图 视图2 左视图</li>
        <li class="l2"><svg class="ch" width="8" height="10"><use href="#chev-r"/></svg><svg class="ic" width="16" height="14"><use href="#proj"/></svg>工程图 视图3 俯视图</li>
      </ul>
    </div>
  </aside>

  <section class="doc">
    <div class="doctabs">
      <div class="dt"><a href="#prt">* 山涧果子.Z3PRT</a><button aria-label="关闭"><svg width="12" height="12"><use href="#x"/></svg></button></div>
      <div class="dt on"><a href="#drw">* 山涧果子.Z3DRW</a><button aria-label="关闭"><svg width="12" height="12"><use href="#x"/></svg></button></div>
      <button class="add" aria-label="新建"><svg width="12" height="12"><use href="#plus"/></svg></button>
      <button class="more" aria-label="文档列表"><svg width="8" height="8" viewBox="0 0 8 8"><path d="M0 1h8" stroke="#888" stroke-width="1.600"/><path d="M0 3.500h8L4 7.500z" fill="#888"/></svg></button>
    </div>
    <div class="canvas">
      <svg class="drawing" viewBox="361 196 1557 783" role="img" aria-label="A3 工程图">
        <rect x="612.500" y="214.500" width="1054.500" height="746" fill="#efedee"/>
        <g class="thin">
          <path d="M744 214v26M876 214v26M1007.500 214v26M1271.500 214v26M1403.500 214v26M1535 214v26M744 935v26M876 935v26M1007.500 935v26M1271.500 935v26M1403.500 935v26M1535 935v26"/>
          <path d="M612 338.500h26M612 463h26M612 711.500h26M612 836h26M1642 338.500h25M1642 463h25M1642 711.500h25M1642 836h25"/>
          <rect x="612.500" y="214.500" width="1054.500" height="746"/>
        </g>
        <g class="mid">
          <rect x="637.500" y="240" width="1004.500" height="695"/>
          <path d="M1139.500 214v38M1139.500 922v38M612 587h38M1629 587h38"/>
          <path d="M1014 935v13h251.500v-13M1039.500 935v13M1064.500 935v13M1089.500 935v13M1114.500 935v13M1164.500 935v13M1190 935v13M1215 935v13M1240 935v13"/>
        </g>
        <path class="corner" d="M612.500 240v-25.500h25M1642 215h25v25M1642 960.500h25V935M612.500 935v25.500h25"/>
        <g class="fr">
          <text x="678" y="232">1</text><text x="810" y="232">2</text><text x="942" y="232">3</text><text x="1074" y="232">4</text><text x="1205" y="232">5</text><text x="1337" y="232">6</text><text x="1469" y="232">7</text><text x="1601" y="232">8</text>
          <text x="678" y="953">1</text><text x="810" y="953">2</text><text x="942" y="953">3</text><text x="1337" y="953">6</text><text x="1469" y="953">7</text><text x="1601" y="953">8</text>
          <text x="624" y="282">A</text><text x="624" y="406">B</text><text x="624" y="531">C</text><text x="624" y="655">D</text><text x="624" y="779">E</text><text x="624" y="903">F</text>
          <text x="1654" y="282">A</text><text x="1654" y="406">B</text><text x="1654" y="531">C</text><text x="1654" y="655">D</text><text x="1654" y="779">E</text><text x="1654" y="903">F</text>
        </g>
        <!-- title block -->
        <g class="thin">
          <path d="M1190 812h201M1190 829.500h201M1190 900h201M1190 917.500h201M1407 890v22M1423.500 890v22M1439.500 890v22"/>
        </g>
        <g class="mid">
          <path d="M1190 948V794.500h452M1215 794v71M1240 794v71M1280.500 794v71M1320.500 794v141M1350.500 794v141M1391 794v141M1516 794v141M1220 865v70M1250 865v70M1290.500 865v70M1190 847.500h201M1190 865h326M1190 882.500h201M1391 890h251M1391 912.500h125M1456 865v47M1486.500 865v47M1516 840h126"/>
        </g>
        <g class="tb">
          <g class="t7"><text x="1202" y="859">Mark</text><text x="1229" y="859">NO.</text><text x="1301" y="859">File NO.</text><text x="1335" y="859">Sign</text></g>
          <g class="t8"><text x="1371" y="859">Date</text><text x="1205" y="911">Check</text><text x="1423" y="880">Drawing Mark</text><text x="1501" y="881">Scale</text><text x="1410" y="928">Sheet</text><text x="1435" y="928">1</text><text x="1457" y="928">of</text><text x="1476" y="928">1</text></g>
          <g class="t7"><text x="1471" y="880">Weight</text></g>
          <g class="t6"><text x="1205" y="875">Designer</text><text x="1305" y="875">Standard</text><text x="1305" y="928">Approved</text><text x="1456" y="832">Stahl</text><text x="1501" y="903">1:1</text></g>
          <g class="t5"><text x="1205" y="928">Technology</text><text x="1577" y="867">山涧果子</text></g>
        </g>
        <!-- front and side views -->
        <g class="mid">
          <path d="M744 369h301.500v37.500H744zM1283.500 369h201v37.500h-201z"/>
        </g>
        <path class="hid" d="M869.500 369v38M919.500 369v38M1359.500 369v38M1409.500 369v38"/>
        <path class="ctr" d="M894.500 356v63M1384.500 356v63"/>
        <path class="dim" d="M1047 369.500h61M1047 406.500h61M1098.500 371v34"/>
        <path d="M1098.500 369l1.500 8h-3zM1098.500 407l1.500-8h-3z"/>
        <!-- top view -->
        <path class="dim" d="M744.500 521v38M894.500 521v188M745 530.500h149M711 558.500h33M711 759.500h33M720.500 560v198M744.500 760v38M1045.500 760v38M745 789.500h300M1046 759.500h84M845 659.500h285M1121.500 661v97M894.500 659l22.500-31.500h44"/>
        <path d="M745 530.500l8-1.500v3zM893 530.500l-8-1.500v3zM720.500 560l-1.500 8h3zM720.500 758l-1.500-8h3zM746 789.500l8-1.500v3zM1044 789.500l-8-1.500v3zM1121.500 661l-1.500 8h3zM1121.500 758l-1.500-8h3zM909 639l-6 5 3 2z"/>
        <path class="solid" d="M744 558.500v201"/>
        <path class="mixed" d="M744 558.500h301.500v201H744"/>
        <path class="solid dashed" d="M744 558.500h301.500v201H744"/>
        <circle class="mid" cx="894.500" cy="659" r="25"/>
        <path class="cross" d="M857 659.500h27M889 659.500h12M907 659.500h26M894.500 621v27M894.500 653v12M894.500 670v27"/>
        <g class="dt-text">
          <text x="816" y="527">60</text><text x="895" y="786">120</text><text x="943" y="625">R10</text>
          <text transform="translate(718 659) rotate(-90)">80</text><text transform="translate(1118 705) rotate(-90)">40</text><text transform="translate(1096 388) rotate(-90)">15</text>
        </g>
        <!-- origin axes -->
        <path d="M612.500 960V903M608.500 898l4 7 4-7M612.500 905v5" fill="none" stroke="#00c814" stroke-width="1.500"/>
        <path d="M613 960.500h47M664 955l9 12M673 955l-9 12" fill="none" stroke="#f01010" stroke-width="1.400"/>
        <g class="read"><text x="365" y="975">311.85mm</text><text x="515" y="975">比例：</text><text x="568" y="975">1:1</text></g>
      </svg>
      <p class="hint">&lt;单击右键&gt;环境相关选项.<br>&lt;Shift +鼠标右键&gt; 显示选择过滤器.</p>
      <div class="viewbar">
        <button aria-label="退出"><svg viewBox="0 0 16 16"><path d="M6 5V2h9v12H6v-3" fill="#eee" stroke="#999" stroke-width="1.400"/><path d="M1 8l5-4v3h5v2H6v3z" fill="#999"/></svg></button>
        <button aria-label="擦除"><svg viewBox="0 0 16 16"><path d="M4 13l1-4 6-6 2 2-6 6z" fill="#f3c04a" stroke="#9c6a1a" stroke-width=".6"/><path d="M3 14l2-4 2 2z" fill="#b5222a"/><path d="M8 5l3 3" stroke="#c8232b" stroke-width="2"/></svg></button>
        <button aria-label="清理"><svg viewBox="0 0 16 16"><path d="M1 9l7-4 4 4-2 6q-5-1-9-6z" fill="#d2ae4f" stroke="#86702c" stroke-width=".6"/><path d="M10 7l5-5" stroke="#1f7ba3" stroke-width="2.500"/></svg></button>
        <button class="on" aria-label="更新"><svg class="big" viewBox="0 0 18 18"><rect x="1" y="2" width="7" height="6" rx="1" fill="#b7d3d0" stroke="#5d8f92"/><rect x="10" y="2" width="7" height="6" rx="1" fill="#b7d3d0" stroke="#5d8f92"/><path d="M1 10v4h4M17 10v4h-4" fill="none" stroke="#c8232b" stroke-width="2"/><path d="M5 11l4-2 5 2v4l-5 2-4-2z" fill="#1487b3"/></svg></button>
        <button aria-label="坐标"><svg viewBox="0 0 16 16"><path d="M1 5l10 9M7 11l5-6" stroke="#2490b3" stroke-width="1.800"/><path d="M8 1l3 4M11 1L8 5M12 1l2 2 2-2M14 3v2" stroke="#c8232b" fill="none"/></svg></button>
        <button class="drop" aria-label="栅格"><svg viewBox="0 0 16 16"><path d="M1 1h14v14H1zM4.500 1v14M8 1v14M11.500 1v14M1 4.500h14M1 8h14M1 11.500h14" fill="none" stroke="#b9573c" stroke-width="1.300"/><path d="M1 1h6v6H1z" fill="#f6d9d5" stroke="#2b6a9b"/><path d="M2 2l4 4M6 2L2 6" stroke="#c8232b"/></svg><svg class="a"><use href="#dn"/></svg></button>
        <button class="drop" aria-label="缩放"><svg viewBox="0 0 16 16"><path d="M0 0h16v16H0z" fill="#4aaed0"/><path d="M2 2h12v12H2z" fill="#d9e7ec"/><circle cx="8" cy="7" r="5" fill="#f4d35a" stroke="#b98912" stroke-width="1.500"/><path d="M7 6h4v8H7z" fill="#9db3bd"/></svg><svg class="a"><use href="#dn"/></svg></button>
        <button class="drop" aria-label="标注"><svg viewBox="0 0 16 16"><path d="M2 1v12M14 1v12M2 6h12" stroke="#2490b3" stroke-width="1.500"/><path d="M2 6l4-2.500v5zM14 6l-4-2.500v5z" fill="#2490b3"/><path d="M3 15h11" stroke="#c8232b" stroke-width="1.500"/></svg><svg class="a"><use href="#dn"/></svg></button>
        <button class="drop" aria-label="显示"><svg viewBox="0 0 16 16"><path d="M0 1h16v11H0z" fill="#777d8b"/><path d="M1 2h14v5L1 11z" fill="#aab0c0"/><path d="M6 12h4l2 3H4z" fill="#999"/></svg><svg class="a"><use href="#dn"/></svg></button>
        <button aria-label="轮廓"><svg viewBox="0 0 16 16"><circle cx="7" cy="9" r="5.500" fill="none" stroke="#4a9fc0" stroke-width="1.300" stroke-dasharray="2 1.500"/><path d="M9 2h5v9" fill="none" stroke="#4a9fc0" stroke-width="1.300" stroke-dasharray="2 1.500"/></svg></button>
        <button aria-label="线宽"><svg viewBox="0 0 16 16"><path d="M0 5.500h16v6H0z"/></svg></button>
        <button class="drop" aria-label="图层"><svg viewBox="0 0 16 16"><path d="M0 9l6-4 10 3-6 5z" fill="#1f8f9c"/><path d="M0 6l6-4 10 3-6 5z" fill="#55cdb8"/></svg><svg class="a"><use href="#dn"/></svg></button>
        <button class="layer"><svg viewBox="0 0 16 16"><path d="M8 1a4.500 4.500 0 0 1 2 8.500V12H6V9.500A4.500 4.500 0 0 1 8 1z" fill="#fdf7b4" stroke="#b8a032"/><path d="M6 13.500h4" stroke="#777" stroke-width="2"/></svg><svg viewBox="0 0 16 16"><circle cx="8" cy="8" r="6" fill="#f2e233" stroke="#3a8fa0" stroke-width="1.500"/></svg>Layer0000<svg class="a"><use href="#dn"/></svg></button>
      </div>
    </div>
    <div class="sheets">
      <button aria-label="首页"><svg width="8" height="8" viewBox="0 0 8 8"><path d="M1 0v8" stroke="#666" stroke-width="1.500"/><path d="M7 0v8L2 4z" fill="#666"/></svg></button>
      <button aria-label="上一页"><svg width="8" height="8" viewBox="0 0 8 8"><path d="M6 0v8L1 4z" fill="#666"/></svg></button>
      <button aria-label="下一页"><svg width="8" height="8" viewBox="0 0 8 8"><path d="M1 0v8l5-4z" fill="#666"/></svg></button>
      <button aria-label="末页"><svg width="8" height="8" viewBox="0 0 8 8"><path d="M7 0v8" stroke="#666" stroke-width="1.500"/><path d="M1 0v8l5-4z" fill="#666"/></svg></button>
      <button class="sheet">图纸1</button>
      <button aria-label="新建图纸"><svg width="12" height="12"><use href="#plus"/></svg></button>
    </div>
  </section>
</main>

<footer class="status">
  <span class="msg">选择命令或实体</span>
  <div class="stools">
    <button class="on" aria-label="管理器"><svg width="14" height="14" viewBox="0 0 14 14"><path d="M.5.5h13v13H.5z" fill="#fff" stroke="#3a63ad"/><path d="M0 0h14v3H0z" fill="#4a7ad0"/><path d="M2 4v9" stroke="#555" stroke-dasharray="1 1"/><path d="M4 3v11" stroke="#3a63ad"/><path d="M6 5h6v2H6z" fill="#444"/><path d="M8 7h2v6H8z" fill="#c8232b"/></svg></button>
    <button aria-label="显示"><svg width="16" height="14" viewBox="0 0 16 14"><path d="M0 1h16v9H0z" fill="#1fa8c8"/><path d="M1 2h14v3H1z" fill="#55d5ea"/><path d="M5 11h6v2H5z" fill="#444"/></svg></button>
    <button aria-label="输出"><svg width="14" height="14" viewBox="0 0 14 14"><path d="M.5.5h13v13H.5z" fill="#fff" stroke="#3a63ad"/><path d="M0 0h14v3H0z" fill="#4a7ad0"/><path d="M2 6h10M2 8.500h10M2 11h7" stroke="#777"/></svg></button>
  </div>
  <input class="cmd" type="text" aria-label="命令输入">
</footer>
<div class="mark">CSDN @山涧果子</div>
</body>
</html>
```
FILE: styles.css
```css
* { box-sizing: border-box; }

body {
  margin: 0;
  min-height: 100vh;
  display: flex;
  flex-direction: column;
  position: relative;
  overflow-x: hidden;
  background: #e2e6e9;
  color: #111;
  font: 12px/16px "Noto Sans", "Noto Sans CJK SC", sans-serif;
}

button, input, select { font: inherit; color: inherit; }
button {
  margin: 0;
  padding: 0;
  border: 0;
  background: none;
  display: flex;
  align-items: center;
  justify-content: center;
  white-space: nowrap;
}
svg { display: block; flex: none; }
h1, h2, p, ul { margin: 0; padding: 0; font: inherit; }
.sprite { position: absolute; width: 0; height: 0; }
.rule { width: 1px; height: 16px; background: #a9afb5; }

/* title bar */
.titlebar { display: flex; align-items: center; min-height: 26px; padding-left: 2px; }
.quick { display: flex; align-items: center; gap: 8px; }
.quick button { width: 16px; height: 16px; }
.quick .rule { height: 12px; margin: 0 1px; }
.quick .narrow { width: 8px; }
.menu { display: flex; gap: 17px; margin-left: 12px; }
.apptitle { margin-left: auto; color: #333; white-space: nowrap; }
.winctl { display: flex; gap: 12px; margin-left: 294px; padding-right: 6px; }

/* ribbon tabs */
.tabrow { display: flex; align-items: stretch; min-height: 20px; position: relative; z-index: 1; }
.filetab { width: 76px; margin-left: 1px; background: #2559ad; border: 1px solid #174a9c; color: #fff; }
.tabs { display: flex; margin-left: 3px; color: #444; }
.tabs button { padding: 0 11px; height: 20px; }
.tabs .on { margin: -1px 0; padding: 0 9px; height: 22px; background: #fcfcfc; border: 1px solid #b7bfc7; border-bottom: 0; }
.tabright { display: flex; align-items: center; gap: 9px; margin-left: auto; padding-right: 5px; }
.search {
  display: flex;
  align-items: center;
  width: 159px;
  height: 20px;
  padding: 0 8px 0 2px;
  background: #fff;
  border: 1px solid #b7bfc7;
}
.search input { flex: 1; min-width: 0; padding: 0; border: 0; outline: 0; background: none; }
.help { gap: 8px; margin-left: 2px; }
.mdi { display: flex; gap: 6px; }

/* ribbon */
.ribbon {
  display: flex;
  min-height: 95px;
  margin-left: 1px;
  background: #fcfcfc;
  border: 1px solid #b7bfc7;
  border-width: 1px 0;
  color: #222;
}
.group {
  display: flex;
  flex-direction: column;
  padding: 6px 3px 1px;
  border-right: 1px solid #c9ced3;
}
.group.first { padding-left: 8px; padding-right: 4px; }
.group h2 { margin-top: auto; text-align: center; color: #5b6378; }
.items { display: flex; }
.items button { flex-direction: column; justify-content: flex-start; min-width: 32px; padding: 0 6px; }
.items button > svg:first-child { height: 32px; margin: 0 -6px 2px; }
.items .dd { margin-top: 7px; }
.ictext { font: bold 10px "Liberation Sans", sans-serif; text-anchor: middle; fill: #0d5c86; }
.cols { display: flex; gap: 8px; padding: 0 6px; }
.edit { padding-right: 3px; }
.col { display: flex; flex-direction: column; align-items: flex-start; gap: 7px; padding-top: 3px; }
.col button { gap: 3px; height: 16px; }
.col .side { margin-left: 5px; }

/* selection bar */
.optbar { display: flex; align-items: center; min-height: 32px; padding: 2px 4px 0; }
.grip { width: 2px; height: 14px; margin-right: 7px; background: repeating-linear-gradient(#6d7c93 0 2px, transparent 2px 4px); }
.combo { position: relative; display: flex; width: 133px; height: 21px; }
.combo select {
  appearance: none;
  width: 100%;
  padding: 0 3px;
  border: 1px solid #b7bfc7;
  border-radius: 0;
  background: #fff;
  color: #000;
  opacity: 1;
}
.combo::after {
  content: "";
  position: absolute;
  right: 6px;
  top: 8px;
  border: 3px solid transparent;
  border-top: 4px solid #222;
}
.combo.dis { margin-left: 5px; }
.combo.dis select { background: #e9ebec; border-color: #d5dade; }
.combo.dis::after { border-top-color: #aaa; }
.scope { margin: 0 32px 0 24px; }
.optbar .rule { margin: 0 4px 0 6px; }
.picks { display: flex; gap: 8px; margin-left: 3px; }
.picks svg { width: 16px; height: 16px; }

/* work area */
.work { flex: 1; display: grid; grid-template-columns: 358px minmax(0, 1fr); gap: 2px; }
.manager { display: flex; flex-direction: column; }
.mhead { display: flex; align-items: center; gap: 8px; height: 20px; padding: 0 7px 0 5px; }
.mhead h2 { margin-right: auto; color: #333; }
.mbody { flex: 1; display: flex; border: 1px solid #b7bfc7; border-left: 0; }
.strip { width: 32px; border-right: 1px solid #b7bfc7; padding-left: 2px; }
.strip button { width: 30px; height: 46px; margin-right: -1px; border: 1px solid #b7bfc7; border-width: 0 0 1px 1px; background: #fcfcfc; }
.tree {
  flex: 1;
  margin-right: 2px;
  padding-left: 1px;
  border-right: 1px solid #c9ced3;
  list-style: none;
  color: #000;
  background: repeating-linear-gradient(#fff 0 18px, #f5f5f5 18px 36px);
}
.tree li { display: flex; align-items: center; height: 18px; padding-top: 3px; white-space: nowrap; }
.tree .ic { margin-right: 2px; }
.tree .ch { width: 10px; margin-right: 5px; }
.l0 { padding-left: 3px; }
.l1 { padding-left: 2px; }
.l2 { padding-left: 16px; }
.l3 { padding-left: 45px; }

.doc { display: flex; flex-direction: column; min-width: 0; border-right: 2px solid #c9ced3; }
.doctabs { display: flex; align-items: stretch; min-height: 23px; border-bottom: 1px solid #b7bfc7; }
.dt { display: flex; align-items: center; gap: 6px; }
.dt a { color: #000; text-decoration: none; }
.dt:first-child { padding: 1px 10px 0 33px; }
.dt.on { padding: 0 10px 0 30px; margin-bottom: -1px; background: #fcfcfc; border: 1px solid #b7bfc7; border-bottom: 0; }
.add { width: 12px; margin-left: 5px; }
.more { margin-left: auto; padding-right: 5px; }

.canvas {
  flex: 1;
  position: relative;
  min-height: 400px;
  border-left: 1px solid #c9ced3;
  background: linear-gradient(#fff, #fdfdfd 3%, #9f9f9f);
}
.drawing { position: absolute; inset: 0; width: 100%; height: 100%; }
.thin, .mid, .dim, .hid, .ctr, .corner, .solid, .mixed, .cross { fill: none; stroke: #000; stroke-width: 1; }
.thin { stroke: #222; }
.mid { stroke-width: 2; }
.corner { stroke-width: 3; }
.solid { stroke-width: 2; }
.dashed { stroke-dasharray: 14 3; }
.mixed { stroke: #444; stroke-width: 2; }
.hid { stroke-dasharray: 12 5; }
.ctr { stroke: #2020ee; stroke-dasharray: 20 5 14 5; }
.cross { stroke: #14148c; }
.drawing text { text-anchor: middle; }
.fr { font: 200 14px "DejaVu Sans", sans-serif; stroke: #000; stroke-width: .3; }
.dt-text { font: 200 16px "DejaVu Sans", sans-serif; stroke: #000; stroke-width: .3; }
.tb { font-family: "Liberation Mono", "Noto Sans CJK SC", monospace; font-weight: bold; }
.t8 { font-size: 8px; }
.t7 { font-size: 7px; }
.t6 { font-size: 6px; }
.t5 { font-size: 5px; }
.drawing .read text { text-anchor: start; font-size: 17px; }

.hint { position: absolute; left: 21px; top: 4px; font-size: 11px; line-height: 14px; color: #222; }
.viewbar { position: absolute; left: 545px; top: 2px; display: flex; align-items: center; gap: 9px; }
.viewbar svg { width: 16px; height: 16px; }
.viewbar .big { width: 18px; height: 18px; }
.viewbar .on { width: 24px; height: 23px; margin: 0 -4px; background: #ffe48a; border: 1px solid #cf9a35; }
.viewbar svg.a { width: 6px; height: 4px; }
.viewbar .drop { gap: 5px; padding-right: 1px; }
.viewbar .layer { gap: 1px; height: 22px; padding: 0 6px 0 3px; margin-left: -4px; background: #fff; border: 1px solid #b7bfc7; }
.layer svg.a { margin-left: 8px; }

.sheets { display: flex; align-items: flex-start; gap: 7px; height: 24px; padding-left: 4px; border-bottom: 1px solid #b7bfc7; }
.sheets button { height: 20px; }
.sheets .sheet { padding: 0 9px; margin: 0 -1px 0 -3px; background: #fff; border: 1px solid #b7bfc7; border-top: 0; color: #000; }

/* status bar */
.status { display: flex; align-items: center; min-height: 27px; padding-right: 2px; }
.msg { margin-left: 5px; margin-right: auto; padding-top: 2px; }
.stools { display: flex; align-items: center; gap: 10px; height: 27px; padding: 0 11px 0 15px; border-left: 1px solid #8d9298; }
.stools .on { width: 21px; height: 20px; background: #ffe48a; border: 1px solid #cf9a35; }
.stools button:last-child { margin-left: 4px; }
.cmd { width: 350px; height: 22px; padding: 0 4px; border: 1px solid #b7bfc7; border-radius: 0; background: #fff; }

.mark {
  position: absolute;
  right: 5px;
  bottom: 8px;
  font-size: 37px;
  font-weight: 300;
  line-height: 48px;
  color: rgba(238, 240, 241, .85);
  text-shadow: 1px 1px 1px rgba(90, 90, 90, .6);
  pointer-events: none;
}
```
